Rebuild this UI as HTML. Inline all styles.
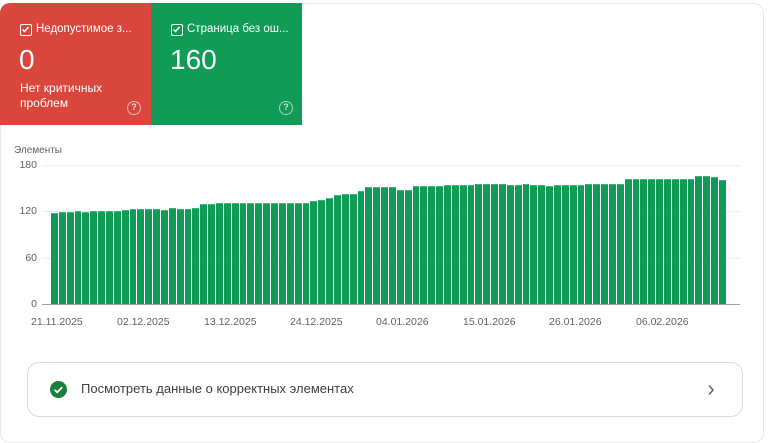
<!DOCTYPE html>
<html><head><meta charset="utf-8"><style>
*{margin:0;padding:0;box-sizing:border-box}
body{width:768px;height:424px;overflow:hidden;background:#fff;font-family:"Liberation Sans",Roboto,sans-serif;position:relative}
.outer{position:absolute;left:0;top:3px;width:764px;height:440px;border:1px solid #e8eaed;border-radius:10px}
.card{position:absolute;top:3px;height:122px;color:#fff}
.red{left:0;width:151px;background:#d9463b;border-top-left-radius:10px}
.green{left:151px;width:151px;background:#109c56}
.cb{position:absolute;left:20px;top:21px;width:12px;height:12px;border:1.5px solid #fff;border-radius:2px}
.cb svg{position:absolute;left:0;top:0}
.t{position:absolute;left:36px;top:20px;font-size:11.5px;white-space:nowrap}
.big{position:absolute;left:19px;top:41px;font-size:28px}
.sub{position:absolute;left:20px;top:78px;font-size:12px;line-height:15px}
.help{position:absolute;left:127px;top:98px;width:14px;height:14px;border:1.5px solid rgba(255,255,255,.6);border-radius:50%;font-size:9px;line-height:11px;text-align:center;color:rgba(255,255,255,.75);font-weight:bold}
.lab{position:absolute;font-size:10px;color:#5f6368}
.yl{position:absolute;right:731px;font-size:10.5px;color:#5f6368;text-align:right}
.gl{position:absolute;left:42px;width:698px;height:1px;background:#eceef0}
.bars{position:absolute;left:51px;top:150px;width:676px;height:154px;display:flex;align-items:flex-end}
.bars i{flex:1;height:calc(var(--v)*0.772px);background:#109c56;margin-right:1px;border-top:1px solid #3fb374}
.xl{position:absolute;top:316px;font-size:10.5px;color:#5f6368}
.bot{position:absolute;left:27px;top:362px;width:716px;height:55px;border:1px solid #dadce0;border-radius:12px}
</style></head><body>
<div class="outer"></div>
<div class="card red">
 <div class="cb"><svg width="9" height="9" viewBox="0 0 9 9"><path d="M1.5 4.5l2 2 4-4.5" stroke="#fff" stroke-width="1.4" fill="none"/></svg></div>
 <div class="t">Недопустимое з...</div>
 <div class="big">0</div>
 <div class="sub">Нет критичных<br>проблем</div>
 <div class="help">?</div>
</div>
<div class="card green">
 <div class="cb"><svg width="9" height="9" viewBox="0 0 9 9"><path d="M1.5 4.5l2 2 4-4.5" stroke="#fff" stroke-width="1.4" fill="none"/></svg></div>
 <div class="t">Страница без ош...</div>
 <div class="big">160</div>
 <div class="help" style="left:128px">?</div>
</div>
<div class="lab" style="left:14px;top:145px">Элементы</div>
<div class="yl" style="top:159px">180</div>
<div class="yl" style="top:205px">120</div>
<div class="yl" style="top:252px">60</div>
<div class="yl" style="top:298px">0</div>
<div class="gl" style="top:165px"></div>
<div class="gl" style="top:211px"></div>
<div class="gl" style="top:258px"></div>
<div class="bars">
<i style="--v:118"></i><i style="--v:119"></i><i style="--v:119"></i><i style="--v:121"></i><i style="--v:119"></i><i style="--v:120"></i><i style="--v:120"></i><i style="--v:120"></i><i style="--v:120"></i><i style="--v:122"></i><i style="--v:123"></i><i style="--v:123"></i><i style="--v:123"></i><i style="--v:123"></i><i style="--v:122"></i><i style="--v:124"></i><i style="--v:123"></i><i style="--v:123"></i><i style="--v:125"></i><i style="--v:129"></i><i style="--v:130"></i><i style="--v:131"></i><i style="--v:131"></i><i style="--v:131"></i><i style="--v:131"></i><i style="--v:131"></i><i style="--v:131"></i><i style="--v:131"></i><i style="--v:131"></i><i style="--v:131"></i><i style="--v:131"></i><i style="--v:131"></i><i style="--v:131"></i><i style="--v:133"></i><i style="--v:135"></i><i style="--v:137"></i><i style="--v:141"></i><i style="--v:142"></i><i style="--v:143"></i><i style="--v:147"></i><i style="--v:151"></i><i style="--v:151"></i><i style="--v:151"></i><i style="--v:151"></i><i style="--v:148"></i><i style="--v:148"></i><i style="--v:153"></i><i style="--v:153"></i><i style="--v:153"></i><i style="--v:153"></i><i style="--v:154"></i><i style="--v:154"></i><i style="--v:154"></i><i style="--v:154"></i><i style="--v:155"></i><i style="--v:155"></i><i style="--v:155"></i><i style="--v:155"></i><i style="--v:154"></i><i style="--v:154"></i><i style="--v:155"></i><i style="--v:154"></i><i style="--v:154"></i><i style="--v:153"></i><i style="--v:154"></i><i style="--v:154"></i><i style="--v:154"></i><i style="--v:154"></i><i style="--v:155"></i><i style="--v:155"></i><i style="--v:155"></i><i style="--v:156"></i><i style="--v:156"></i><i style="--v:162"></i><i style="--v:162"></i><i style="--v:162"></i><i style="--v:162"></i><i style="--v:162"></i><i style="--v:162"></i><i style="--v:162"></i><i style="--v:162"></i><i style="--v:162"></i><i style="--v:166"></i><i style="--v:166"></i><i style="--v:165"></i><i style="--v:160"></i>
</div>
<div class="gl" style="top:304px;background:#9aa0a6"></div>
<div class="xl" style="left:31px">21.11.2025</div>
<div class="xl" style="left:117px">02.12.2025</div>
<div class="xl" style="left:204px">13.12.2025</div>
<div class="xl" style="left:290px">24.12.2025</div>
<div class="xl" style="left:376px">04.01.2026</div>
<div class="xl" style="left:463px">15.01.2026</div>
<div class="xl" style="left:549px">26.01.2026</div>
<div class="xl" style="left:636px">06.02.2026</div>
<div class="bot">
 <svg style="position:absolute;left:22px;top:18px" width="17" height="17" viewBox="0 0 17 17"><circle cx="8.5" cy="8.5" r="8.5" fill="#188038"/><path d="M4.6 8.8l2.6 2.6 5-5.2" stroke="#fff" stroke-width="1.8" fill="none"/></svg>
 <div style="position:absolute;left:53px;top:18px;font-size:13px;color:#3c4043">Посмотреть данные о корректных элементах</div>
 <svg style="position:absolute;left:679px;top:21px" width="8" height="12" viewBox="0 0 8 12"><path d="M2 1.5l4 4.5-4 4.5" stroke="#5f6368" stroke-width="1.5" fill="none"/></svg>
</div>
</body></html>
